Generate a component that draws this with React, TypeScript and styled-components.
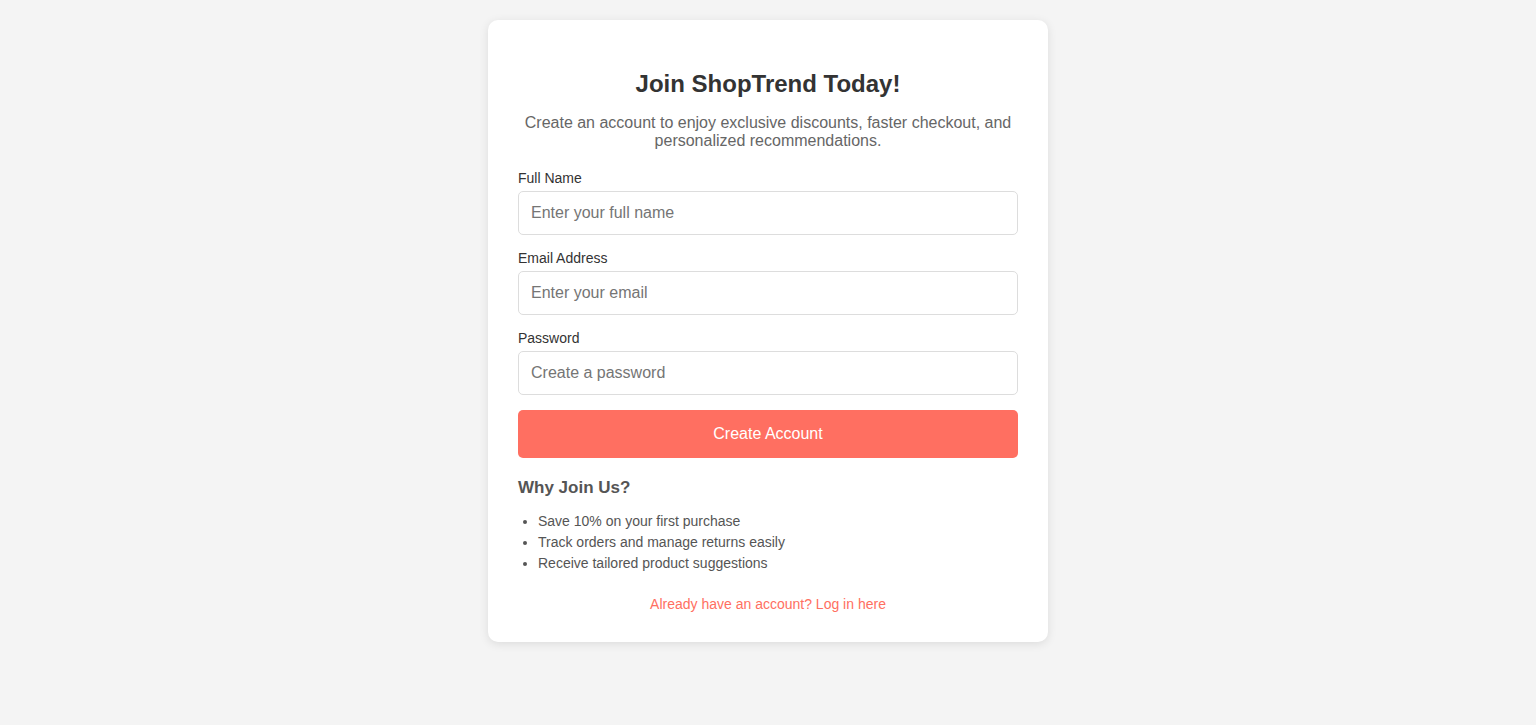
import React from "react";
import styled, { createGlobalStyle } from "styled-components";

const GlobalStyle = createGlobalStyle`
  html, body {
    margin: 0;
    padding: 0;
    background: #f4f4f4;
    font-family: "Liberation Sans", Arial, Helvetica, sans-serif;
  }
  * { box-sizing: border-box; }
`;

const Page = styled.div`
  display: flex;
  justify-content: center;
  padding: 20px 0 40px;
`;

const Card = styled.div`
  width: 560px;
  background: #ffffff;
  border-radius: 10px;
  box-shadow: 0 2px 10px rgba(0, 0, 0, 0.1);
  padding: 30px;
`;

const Title = styled.h2`
  margin: 20px 0 0;
  font-size: 24px;
  line-height: 28px;
  font-weight: bold;
  color: #333333;
  text-align: center;
`;

const Intro = styled.p`
  margin: 16px 0 20px;
  font-size: 16px;
  line-height: 18px;
  color: #666666;
  text-align: center;
`;

const Form = styled.form`
  display: flex;
  flex-direction: column;
`;

const Group = styled.div`
  display: flex;
  flex-direction: column;
  margin-bottom: 15px;
`;

const Label = styled.label`
  font-size: 14px;
  line-height: 16px;
  color: #333333;
  margin-bottom: 5px;
`;

const Input = styled.input`
  height: 44px;
  padding: 0 12px;
  border: 1px solid #dddddd;
  border-radius: 5px;
  font-family: inherit;
  font-size: 16px;
  color: #333;
  outline: none;
  &::placeholder {
    color: #757575;
  }
`;

const Button = styled.button`
  height: 48px;
  border: none;
  border-radius: 5px;
  background: #ff6f61;
  color: #ffffff;
  font-family: inherit;
  font-size: 16px;
  cursor: pointer;
`;

const BenefitsTitle = styled.h3`
  margin: 20px 0 13px;
  font-size: 17px;
  line-height: 20px;
  font-weight: bold;
  color: #555555;
`;

const List = styled.ul`
  margin: 0;
  padding-left: 20px;
`;

const Item = styled.li`
  font-size: 14px;
  line-height: 21px;
  color: #555555;
`;

const Footer = styled.p`
  margin: 22px 0 0;
  text-align: center;
  font-size: 14px;
  line-height: 16px;
`;

const LoginLink = styled.a`
  color: #ff6f61;
  text-decoration: none;
`;

const fields = [
  { id: "name", label: "Full Name", type: "text", placeholder: "Enter your full name" },
  { id: "email", label: "Email Address", type: "email", placeholder: "Enter your email" },
  { id: "password", label: "Password", type: "password", placeholder: "Create a password" },
];

const benefits = [
  "Save 10% on your first purchase",
  "Track orders and manage returns easily",
  "Receive tailored product suggestions",
];

export default function App() {
  return (
    <>
      <GlobalStyle />
      <Page>
        <Card>
          <Title>Join ShopTrend Today!</Title>
          <Intro>
            Create an account to enjoy exclusive discounts, faster checkout, and personalized recommendations.
          </Intro>
          <Form onSubmit={(e) => e.preventDefault()}>
            {fields.map((f) => (
              <Group key={f.id}>
                <Label htmlFor={f.id}>{f.label}</Label>
                <Input id={f.id} type={f.type} placeholder={f.placeholder} />
              </Group>
            ))}
            <Button type="submit">Create Account</Button>
          </Form>
          <BenefitsTitle>Why Join Us?</BenefitsTitle>
          <List>
            {benefits.map((b) => (
              <Item key={b}>{b}</Item>
            ))}
          </List>
          <Footer>
            <LoginLink href="#">Already have an account? Log in here</LoginLink>
          </Footer>
        </Card>
      </Page>
    </>
  );
}
